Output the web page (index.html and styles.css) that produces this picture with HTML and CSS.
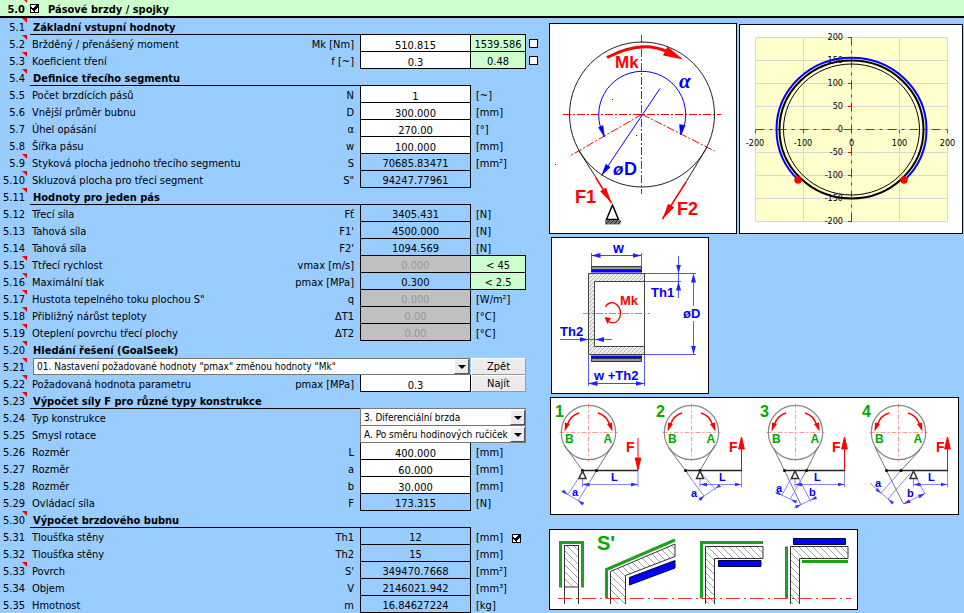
FILE: index.html
```html
<!DOCTYPE html>
<html lang="cs">
<head>
<meta charset="utf-8">
<title>Pásové brzdy / spojky</title>
<link rel="stylesheet" href="styles.css">
</head>
<body>
<header class="title-bar">
  <span class="num note">5.0</span>
  <input type="checkbox" class="check" id="section-on" checked>
  <label for="section-on"><h1>Pásové brzdy / spojky</h1></label>
</header>
<main class="sheet">
<table class="calc">
  <colgroup><col class="c-num"><col><col class="c-sym"><col class="c-val"><col class="c-unit"><col class="c-tail"></colgroup>
  <tbody>
  <tr><td class="num note">5.1</td><th class="line" colspan="2">Základní vstupní hodnoty</th><td class="line"></td><td class="line"></td><td></td></tr>
  <tr><td class="num note">5.2</td><td><label for="mk">Bržděný / přenášený moment</label></td><td class="sym">Mk [Nm]</td><td class="val in"><input id="mk" type="text" value="510.815"></td><td class="lim">1539.586</td><td class="tick"><input type="checkbox" class="check" aria-label="Mk"></td></tr>
  <tr><td class="num note">5.3</td><td><label for="f">Koeficient tření</label></td><td class="sym">f [~]</td><td class="val in"><input id="f" type="text" value="0.3"></td><td class="lim">0.48</td><td class="tick"><input type="checkbox" class="check" aria-label="f"></td></tr>
  <tr><td class="num note">5.4</td><th class="line" colspan="2">Definice třecího segmentu</th><td class="line"></td><td></td><td></td></tr>
  <tr><td class="num">5.5</td><td><label for="n">Počet brzdících pásů</label></td><td class="sym">N</td><td class="val in"><input id="n" type="text" value="1"></td><td class="unit">[~]</td><td></td></tr>
  <tr><td class="num">5.6</td><td><label for="d">Vnější průměr bubnu</label></td><td class="sym">D</td><td class="val in"><input id="d" type="text" value="300.000"></td><td class="unit">[mm]</td><td></td></tr>
  <tr><td class="num">5.7</td><td><label for="alpha">Úhel opásání</label></td><td class="sym">α</td><td class="val in"><input id="alpha" type="text" value="270.00"></td><td class="unit">[°]</td><td></td></tr>
  <tr><td class="num">5.8</td><td><label for="w">Šířka pásu</label></td><td class="sym">w</td><td class="val in"><input id="w" type="text" value="100.000"></td><td class="unit">[mm]</td><td></td></tr>
  <tr><td class="num note">5.9</td><td>Styková plocha jednoho třecího segmentu</td><td class="sym">S</td><td class="val">70685.83471</td><td class="unit">[mm²]</td><td></td></tr>
  <tr><td class="num note">5.10</td><td>Skluzová plocha pro třecí segment</td><td class="sym">S"</td><td class="val">94247.77961</td><td></td><td></td></tr>
  <tr><td class="num note">5.11</td><th class="line" colspan="2">Hodnoty pro jeden pás</th><td class="line"></td><td></td><td></td></tr>
  <tr><td class="num">5.12</td><td>Třecí síla</td><td class="sym">Fť</td><td class="val">3405.431</td><td class="unit">[N]</td><td></td></tr>
  <tr><td class="num">5.13</td><td>Tahová síla</td><td class="sym">F1'</td><td class="val">4500.000</td><td class="unit">[N]</td><td></td></tr>
  <tr><td class="num">5.14</td><td>Tahová síla</td><td class="sym">F2'</td><td class="val">1094.569</td><td class="unit line">[N]</td><td></td></tr>
  <tr><td class="num note">5.15</td><td>Ttřecí rychlost</td><td class="sym">vmax [m/s]</td><td class="val off">0.000</td><td class="lim">&lt; 45</td><td></td></tr>
  <tr><td class="num note">5.16</td><td>Maximální tlak</td><td class="sym">pmax [MPa]</td><td class="val">0.300</td><td class="lim">&lt; 2.5</td><td></td></tr>
  <tr><td class="num note">5.17</td><td>Hustota tepelného toku plochou S"</td><td class="sym">q</td><td class="val off">0.000</td><td class="unit">[W/m²]</td><td></td></tr>
  <tr><td class="num note">5.18</td><td>Přibližný nárůst teploty</td><td class="sym">ΔT1</td><td class="val off">0.00</td><td class="unit">[°C]</td><td></td></tr>
  <tr><td class="num note">5.19</td><td>Oteplení povrchu třecí plochy</td><td class="sym">ΔT2</td><td class="val off">0.00</td><td class="unit">[°C]</td><td></td></tr>
  <tr><td class="num note">5.20</td><th colspan="2">Hledání řešení (GoalSeek)</th><td></td><td></td><td></td></tr>
  <tr><td class="num note">5.21</td><td class="wide" colspan="3"><span class="drop"><select aria-label="Hledání řešení"><option>01. Nastavení požadované hodnoty "pmax" změnou hodnoty "Mk"</option></select><i></i></span></td><td class="fill"><button type="button">Zpět</button></td><td></td></tr>
  <tr><td class="num note">5.22</td><td><label for="goal">Požadovaná hodnota parametru</label></td><td class="sym">pmax [MPa]</td><td class="val in"><input id="goal" type="text" value="0.3"></td><td class="fill"><button type="button">Najít</button></td><td></td></tr>
  <tr><td class="num note">5.23</td><th class="line" colspan="2">Výpočet síly F pro různé typy konstrukce</th><td class="edge"></td><td class="edge"></td><td></td></tr>
  <tr><td class="num">5.24</td><td colspan="2"><label for="type">Typ konstrukce</label></td><td class="fill" colspan="2"><span class="drop"><select id="type"><option>3. Diferenciální brzda</option></select><i></i></span></td><td></td></tr>
  <tr><td class="num">5.25</td><td colspan="2"><label for="rot">Smysl rotace</label></td><td class="fill" colspan="2"><span class="drop"><select id="rot"><option>A. Po směru hodinových ručiček</option></select><i></i></span></td><td></td></tr>
  <tr><td class="num">5.26</td><td><label for="l">Rozměr</label></td><td class="sym">L</td><td class="val in"><input id="l" type="text" value="400.000"></td><td class="unit">[mm]</td><td></td></tr>
  <tr><td class="num">5.27</td><td><label for="a">Rozměr</label></td><td class="sym">a</td><td class="val in"><input id="a" type="text" value="60.000"></td><td class="unit">[mm]</td><td></td></tr>
  <tr><td class="num">5.28</td><td><label for="b">Rozměr</label></td><td class="sym">b</td><td class="val in"><input id="b" type="text" value="30.000"></td><td class="unit">[mm]</td><td></td></tr>
  <tr><td class="num">5.29</td><td>Ovládací síla</td><td class="sym">F</td><td class="val">173.315</td><td class="unit">[N]</td><td></td></tr>
  <tr><td class="num note">5.30</td><th class="line" colspan="2">Výpočet brzdového bubnu</th><td class="line"></td><td></td><td></td></tr>
  <tr><td class="num">5.31</td><td>Tloušťka stěny</td><td class="sym">Th1</td><td class="val">12</td><td class="unit"><span class="with-check">[mm]<input type="checkbox" class="check" aria-label="Th1" checked></span></td><td></td></tr>
  <tr><td class="num">5.32</td><td>Tloušťka stěny</td><td class="sym">Th2</td><td class="val">15</td><td class="unit">[mm]</td><td></td></tr>
  <tr><td class="num note">5.33</td><td>Povrch</td><td class="sym">S'</td><td class="val">349470.7668</td><td class="unit">[mm²]</td><td></td></tr>
  <tr><td class="num">5.34</td><td>Objem</td><td class="sym">V</td><td class="val">2146021.942</td><td class="unit">[mm³]</td><td></td></tr>
  <tr><td class="num">5.35</td><td>Hmotnost</td><td class="sym">m</td><td class="val">16.84627224</td><td class="unit">[kg]</td><td></td></tr>
  </tbody>
</table>

<section class="figures">
  <div class="pair">
  <figure>
  <svg width="186" height="209" viewBox="550 24 186 209" role="img" aria-label="Schéma pásové brzdy">
    <defs>
      <marker id="ab" viewBox="0 0 12 6" refX="12" refY="3" markerWidth="12" markerHeight="6" markerUnits="userSpaceOnUse" orient="auto-start-reverse"><path d="M0 0L12 3L0 6z" fill="#00f"/></marker>
      <marker id="ar" viewBox="0 0 16 7" refX="16" refY="3.5" markerWidth="16" markerHeight="7" markerUnits="userSpaceOnUse" orient="auto"><path d="M0 0L16 3.5L0 7z" fill="#f00"/></marker>
    </defs>
    <g fill="none" stroke="#f00" stroke-dasharray="8 2 2 2"><path d="M641.500 35V194M563 114.500H721M642 114.300L569 156.500M642 114.300L714.500 151"/></g>
    <circle cx="642" cy="114.500" r="72.500" fill="none" stroke="#222"/>
    <path d="M579 151L597 179M706.500 148L686 182" stroke="#222"/>
    <path d="M607 57.500Q642 39 668 52" fill="none" stroke="#f00" stroke-width="3"/>
    <path d="M683 59.500L663 55.500L667.500 46.500z" fill="#f00"/>
    <path d="M604.500 136.500A43.500 43.500 0 1 1 681 134.500" fill="none" stroke="#00f"/>
    <path d="M604.500 137L598.500 127.500L603 125.500zM680.500 135L679.500 124.500L685 125.500z" fill="#00f" stroke="#00f" stroke-width=".5"/>
    <path d="M660 88.500L601.500 175.500" stroke="#00f" marker-end="url(#ab)"/>
    <path d="M596 178L611.500 203" stroke="#f00" stroke-width="1.500" marker-end="url(#ar)"/>
    <path d="M686 182L662.500 219" stroke="#f00" stroke-width="1.500" marker-end="url(#ar)"/>
    <path d="M612.500 205L606.500 219.500H618.500z" fill="#fff" stroke="#000" stroke-width="1.500"/>
    <rect x="605" y="220" width="15.500" height="4.500" fill="#777"/><path d="M606 224l4-4M610 224l4-4M614 224l4-4M618 224l3-3" stroke="#222"/>
    <path d="M612 99.500h1M636 135.500h1M555 164.500h1" stroke="#00f"/>
    <g class="lab" font-size="18"><text class="r" x="615" y="67.500" font-size="17">Mk</text><text class="r" x="575" y="203">F1</text><text class="r" x="677" y="215">F2</text><text class="b" x="624" y="174.500">D</text><text class="b" x="613" y="174.500" font-size="17" font-style="italic">ø</text></g>
    <text class="b alpha" x="679" y="88" font-size="21">α</text>
  </svg>
  </figure>
  <figure class="chart">
  <svg width="222" height="208" viewBox="740 25 222 208" role="img" aria-label="Graf bubnu a pásu">
    <rect x="755.500" y="37.500" width="192" height="184" fill="#ffc"/>
    <path d="M755.500 37.500V221.500M803.500 37.500V221.500M851.500 37.500V221.500M899.500 37.500V221.500M947.500 37.500V221.500M755.500 37.500H947.500M755.500 60.500H947.500M755.500 83.500H947.500M755.500 106.500H947.500M755.500 129.500H947.500M755.500 152.500H947.500M755.500 175.500H947.500M755.500 198.500H947.500M755.500 221.500H947.500" stroke="#d8d8d8"/>
    <path d="M755.500 129.500H947.500M851.500 221.500V37.500" stroke="#f00" stroke-dasharray="9 5 3 5"/>
    <path d="M848 37.500h4M848 60.500h4M848 83.500h4M848 106.500h4M848 129.500h4M848 152.500h4M848 175.500h4M848 198.500h4M848 221.500h4M755.500 130v3M803.500 130v3M851.500 130v3M899.500 130v3M947.500 130v3" stroke="#f00"/>
    <g class="axis" text-anchor="end"><text x="843" y="40">200</text><text x="843" y="63">150</text><text x="843" y="86">100</text><text x="843" y="109">50</text><text x="843" y="132">0</text><text x="843" y="155">-50</text><text x="843" y="178">-100</text><text x="843" y="201">-150</text><text x="843" y="224">-200</text></g>
    <g class="axis" text-anchor="middle"><text x="755" y="146">-200</text><text x="803" y="146">-100</text><text x="851.500" y="146">0</text><text x="899.500" y="146">100</text><text x="947.500" y="146">200</text></g>
    <g fill="none" stroke="#000"><ellipse cx="851.500" cy="129.500" rx="72" ry="69" stroke-width="2"/><ellipse cx="851.500" cy="129.500" rx="68" ry="65.500"/>
    <path d="M798.500 180.200A75 71.700 0 1 1 904.500 180.200" stroke="#00f" stroke-width="2"/></g>
    <circle cx="798" cy="180" r="3.700" fill="#f00"/><circle cx="904" cy="180" r="3.700" fill="#f00"/>
  </svg>
  </figure>
  </div>
  <figure class="section-view">
  <svg width="156" height="155" viewBox="552 238 156 155" role="img" aria-label="Řez bubnem">
    <defs>
      <pattern id="h1" width="4" height="4" patternUnits="userSpaceOnUse"><path d="M-1 5L5 -1M-1 1L1 -1M3 5L5 3" stroke="#999" stroke-width=".7"/></pattern>
      <marker id="as" viewBox="0 0 9 5" refX="9" refY="2.500" markerWidth="9" markerHeight="5" markerUnits="userSpaceOnUse" orient="auto-start-reverse"><path d="M0 0L9 2.500L0 5z" fill="#22f"/></marker>
    </defs>
    <path d="M644.500 273.500H588.500V354.500H644.500V346.500H594.500V281.500H644.500z" fill="#eee"/>
    <path d="M644.500 273.500H588.500V354.500H644.500V346.500H594.500V281.500H644.500z" fill="url(#h1)" stroke="#444"/><path d="M644.500 273V355" stroke="#444"/>
    <path d="M591.500 266.500h50v3h-50zM591.500 358.500h50v3h-50z" fill="#999" stroke="#333"/>
    <path d="M591 270h51v2.500h-51zM591 355.500h51v2.500h-51z" fill="#00f"/>
    <path d="M583 313.500H650" stroke="#f66" stroke-dasharray="7 2 2 2"/>
    <g stroke="#44f" fill="none" stroke-width=".9">
      <path d="M591.500 253V266M641.500 253V266M645 273.500H696M645 281.500H681M645 354.500H696M588.500 355V386M644.500 355V386M588.500 339.500H595"/>
      <path d="M591.500 255.500H641.500M588.500 383.500H644.500"/>
      <path d="M591.500 255.500H641.500" marker-start="url(#as)" marker-end="url(#as)"/>
      <path d="M588.500 383.500H644.500" marker-start="url(#as)" marker-end="url(#as)"/>
      <path d="M678.500 256V273.500" marker-end="url(#as)"/><path d="M678.500 298V281.500" marker-end="url(#as)"/><path d="M678.500 273V282"/>
      <path d="M693.500 306V273.500" marker-end="url(#as)"/><path d="M693.500 321V354.500" marker-end="url(#as)"/>
      <path d="M560 339.500H588.500" marker-end="url(#as)"/><path d="M612 339.500H595" marker-end="url(#as)"/>
    </g>
    <path d="M605.500 307C608 302 614 301 618 306C622 311 621 319 616 322C612 324 608 322 606 319" fill="none" stroke="#f00" stroke-width="1.300"/>
    <path d="M604.500 317L611 318L607.500 324z" fill="#f00"/>
    <g class="lab" font-size="13"><text class="b" x="613" y="252.500" font-size="14">w</text><text class="r" x="620" y="305">Mk</text><text class="b" x="651" y="296.500">Th1</text><text class="b" x="683" y="318">øD</text><text class="b" x="560" y="336">Th2</text><text class="b" x="594" y="380">w +Th2</text></g>
  </svg>
  </figure>
  <figure class="types">
  <svg width="407" height="116" viewBox="551 397 407 116" role="img" aria-label="Typy konstrukce 1 až 4">
    <defs>
      <g id="drum">
        <path d="M-29 0H29M0 -29V29" stroke="#f99" stroke-dasharray="5 2 2 2"/>
        <circle r="27.200" fill="none" stroke="#888" stroke-width="1.200"/>
        <path d="M-9.500 -19.500Q-18 -17 -21 -8M9.500 -19.500Q18 -17 21 -8" fill="none" stroke="#f00" stroke-width="1.500"/>
        <path d="M-24 -1L-23.500 -10L-18.500 -8.500zM24 -1L23.500 -10L18.500 -8.500z" fill="#f00"/>
        <g class="lab g" font-size="12"><text x="-23.500" y="10">B</text><text x="15" y="10">A</text></g>
      </g>
      <path id="sup" d="M0 1L-3.500 8.500H3.500z" fill="#fff" stroke="#333" stroke-width="1.500"/>
      <path id="up" d="M0 0V-25M0 -33L-2.800 -21H2.800z" fill="#f00" stroke="#f00"/>
      <marker id="at" viewBox="0 0 7 4" refX="7" refY="2" markerWidth="7" markerHeight="4" markerUnits="userSpaceOnUse" orient="auto-start-reverse"><path d="M0 0L7 2L0 4z" fill="#33f"/></marker>
    </defs>
    <use href="#drum" x="588.500" y="431.500"/><use href="#drum" x="691.500" y="431.500"/><use href="#drum" x="795.500" y="431.500"/><use href="#drum" x="898.500" y="431.500"/>
    <g stroke="#777" fill="none">
      <path d="M564 444L582.500 469.500M613.500 443L596.500 469.500L592 477M668 446L685.500 469.500L692 479M715 444L700 469.500M773.500 447L784.500 469.500L801 504M818 446L806.500 469.500L802 477M875 446L886.500 469.500L903.500 503M920 449L901 469.500"/>
    </g>
    <g stroke="#77f" fill="none" stroke-width=".9">
      <path d="M592 477L578 500M580.500 474L568 493.500M692 479L704 495M701 472L716 489M802 477L790.500 497.500M793 474L782 494M797 474L811 501M901 469.500L881.500 491.500M910.500 472L888 498M915 474L925 493"/>
      <path d="M582.500 478V486M638 470V486M700 478V486M741.500 470V486M795 478V486M844.500 470V486M913.500 478V486M947.500 470V486"/>
      <g marker-start="url(#at)" marker-end="url(#at)"><path d="M582.500 483.500H638"/><path d="M700 483.500H741.500"/><path d="M795 483.500H844.500"/><path d="M913.500 483.500H947.500"/><path d="M903.500 503L925 492.500"/></g>
      <path d="M561 489.500L584 503M698 499.500L720 484M775 491L797.500 501.500M794 507L816.500 496M870 482L893 502.500"/>
    </g>
    <path d="M568 493.500l-6 -2 1.800-3zM578 499.500l6 2-1.800 3zM704 495l-3 5-2.500-3zM716 487l5-1-2-3zM782 494l-6-1 1.500-3zM791 498.500l6 1-1.500 3zM801 503.500l-6 1 1.500 3zM811 499l6-1-1.500-3zM881.500 492.500l-6-3 2-2.500zM888 498l6 3-2 2.500z" fill="#33f"/>
    <path d="M582 469.500H638M685 469.500H742M784 469.500H845M886 469.500H948" stroke="#222" stroke-width="1.600"/>
    <g fill="#000"><circle cx="596.500" cy="469.500" r="1.500"/><circle cx="582.500" cy="469.500" r="1.500"/><circle cx="685.500" cy="469.500" r="1.500"/><circle cx="700" cy="469.500" r="1.500"/><circle cx="784.500" cy="469.500" r="1.500"/><circle cx="806.500" cy="469.500" r="1.500"/><circle cx="886.500" cy="469.500" r="1.500"/><circle cx="901" cy="469.500" r="1.500"/></g>
    <use href="#sup" x="582.500" y="469"/><use href="#sup" x="700" y="469"/><use href="#sup" x="795" y="469"/><use href="#sup" x="913.500" y="469"/>
    <path d="M638 437V460M638 469L635.200 457H640.800z" fill="#f00" stroke="#f00"/>
    <use href="#up" x="741.500" y="469"/><use href="#up" x="844.500" y="469"/><use href="#up" x="947.500" y="469"/>
    <g class="lab g" font-size="16"><text x="555" y="416">1</text><text x="656" y="416">2</text><text x="760" y="416">3</text><text x="862" y="416">4</text></g>
    <g class="lab r" font-size="14"><text x="626" y="451">F</text><text x="729" y="451">F</text><text x="832" y="451">F</text><text x="936" y="451">F</text></g>
    <g class="lab b" font-size="11"><text x="611" y="480">L</text><text x="719" y="480">L</text><text x="814" y="480">L</text><text x="928" y="480">L</text><text x="572" y="494.500">a</text><text x="691" y="495.500">a</text><text x="776" y="490.500">a</text><text x="875" y="486">a</text><text x="809" y="495">b</text><text x="907" y="495.500">b</text></g>
  </svg>
  </figure>
  <figure class="last">
  <svg width="307" height="79" viewBox="550 530 307 79" role="img" aria-label="Povrch S'">
    <defs><pattern id="h2" width="7" height="7" patternUnits="userSpaceOnUse"><path d="M-1 -1L8 8M-1 6L1 8M6 -1L8 1" stroke="#888" stroke-width=".8"/></pattern></defs>
    <rect x="564.500" y="545.500" width="14" height="41.500" fill="url(#h2)" stroke="#333"/>
    <path d="M564.500 587V604M578.500 587V604" stroke="#333"/>
    <path d="M610.500 604V571.500L675 544V556.500L625.500 575.500V604M705.500 604V546.500H763V558.500H714.500V604M790.500 604V546.500H848V558.500H799.500V604" fill="url(#h2)" stroke="#333"/>
    <path d="M560.500 587.500V542.500H582.500V587.500M606.500 598.500V569.500L675 540M701.500 598.500V542.500H763M786.500 546.500V598.500M802 561.500H848" fill="none" stroke="#1fa01f" stroke-width="3"/>
    <path d="M629.500 577.500L675 560.500V568L629.500 585zM718.500 560.500h42.500v6h-42.500zM793.500 538.500h52v6h-52z" fill="#00f" stroke="#003"/>
    <path d="M558 598.500H851" stroke="#e33" stroke-dasharray="14 4 2 4"/>
    <text class="lab g" x="597" y="550" font-size="20">S'</text>
  </svg>
  </figure>
</section>
</main>
</body>
</html>
```

FILE: styles.css
```css
* { box-sizing: border-box; }

body {
  margin: 0;
  background: #99ccff;
  color: #000;
  font-family: "DejaVu Sans Condensed", "DejaVu Sans", sans-serif;
  font-size: 11px;
  line-height: 16px;
}

.title-bar {
  display: flex;
  align-items: center;
  height: 18px;
  background: #ccffcc;
  border-bottom: 2px solid #000;
  font-weight: bold;
}
.title-bar .num { width: 30px; padding-top: 4px; }
.title-bar h1 {
  margin: 0;
  padding: 4px 0 0 9px;
  font-size: 11px;
}

.sheet { display: flex; align-items: stretch; }

/* calculation table */
.calc {
  flex: 1 1 548px;
  align-self: flex-start;
  table-layout: fixed;
  width: 548px;
  border-collapse: separate;
  border-spacing: 0;
}
.c-num { width: 30px; }
.c-sym { width: 70px; }
.c-val { width: 111px; }
.c-unit { width: 55px; }
.c-tail { width: 22px; }

.calc td, .calc th {
  height: 17px;
  padding: 4px 0 0 2px;
  line-height: 12px;
  text-align: left;
  vertical-align: top;
  white-space: nowrap;
  border: 0 solid #000;
}
.calc th { padding-left: 3px; }
.calc .line { border-bottom-width: 1px; }
.calc .edge { border-bottom: 1px solid #777; }

.num, .calc td.num {
  position: relative;
  padding-left: 0;
  padding-right: 5px;
  text-align: right;
}
.note::after {
  content: "";
  position: absolute;
  top: 0;
  right: 3px;
  border-top: 5px solid #f00;
  border-left: 5px solid transparent;
}

.calc td.sym { text-align: right; padding-right: 6px; }
.calc td.unit { padding-left: 5px; }
.calc td.val {
  padding-left: 0;
  text-align: center;
  border-width: 0 1px 1px;
}
.calc td.in { background: #fff; padding: 0; }
.calc td.off { background: #c0c0c0; color: #969696; }
.calc td.lim {
  padding-left: 0;
  background: #ccffcc;
  text-align: center;
  border-width: 0 1px 1px 0;
}
.calc td.fill { padding: 0; }
.calc td.wide { padding: 0 1px 0 3px; }
.calc td.tick { padding: 0 0 0 3px; vertical-align: middle; }

.in input {
  display: block;
  width: 100%;
  height: 16px;
  margin: 0;
  padding: 4px 0 0;
  border: 0;
  background: transparent;
  color: inherit;
  font: inherit;
  line-height: 12px;
  text-align: center;
}

.check {
  appearance: none;
  display: block;
  flex: none;
  width: 9px;
  height: 9px;
  margin: 0;
  border: 1px solid #000;
  background: #fff;
}
.check:checked {
  background:
    linear-gradient(45deg, transparent 34%, #000 34% 66%, transparent 66%) 0 2px / 4px 5px no-repeat,
    linear-gradient(135deg, transparent 34%, #000 34% 64%, transparent 64%) 2px 0 / 5px 6px no-repeat,
    #fff;
}
.with-check { display: flex; align-items: center; gap: 9px; }

.drop { position: relative; display: block; }
.drop select {
  appearance: none;
  display: block;
  width: 100%;
  height: 17px;
  padding: 0 16px 0 3px;
  border: solid #777;
  border-width: 0 1px 1px;
  border-radius: 0;
  background: #fff;
  color: #000;
  font: inherit;
  font-size: 10px;
  line-height: 15px;
}
.wide select { border-top-width: 1px; }
.drop i {
  position: absolute;
  top: 1px;
  right: 1px;
  width: 15px;
  height: 15px;
  border: 1px solid;
  border-color: #fff #555 #555 #fff;
  background: #ececec;
  pointer-events: none;
}
.drop i::before {
  content: "";
  position: absolute;
  top: 5px;
  left: 3px;
  border: 4px solid transparent;
  border-top-color: #000;
  border-bottom: 0;
}

button {
  display: block;
  width: 100%;
  height: 17px;
  padding: 0;
  border: 1px solid;
  border-color: #fff #999 #999 #fff;
  background: #ebebeb;
  color: #000;
  font: inherit;
  line-height: 14px;
}

/* drawings */
.figures {
  flex: 1 1 416px;
  display: flex;
  flex-direction: column;
  align-items: flex-start;
  gap: 3px;
  padding: 5px 0 3px 1px;
}
.pair { display: flex; align-items: flex-end; gap: 2px; }
figure {
  margin: 0;
  border: 1px solid #000;
  background: #fff;
}
figure svg { display: block; max-width: 100%; }
.section-view { margin-left: 2px; }
.types { margin-left: 1px; }
.last { margin-top: auto; }

.lab { font-family: "Liberation Sans", sans-serif; font-weight: bold; }
.alpha { font-family: "Liberation Serif", serif; font-style: italic; font-weight: bold; }
.axis { font-size: 9px; }
.r { fill: #f00; }
.b { fill: #00f; }
.g { fill: #0a0; }
```
